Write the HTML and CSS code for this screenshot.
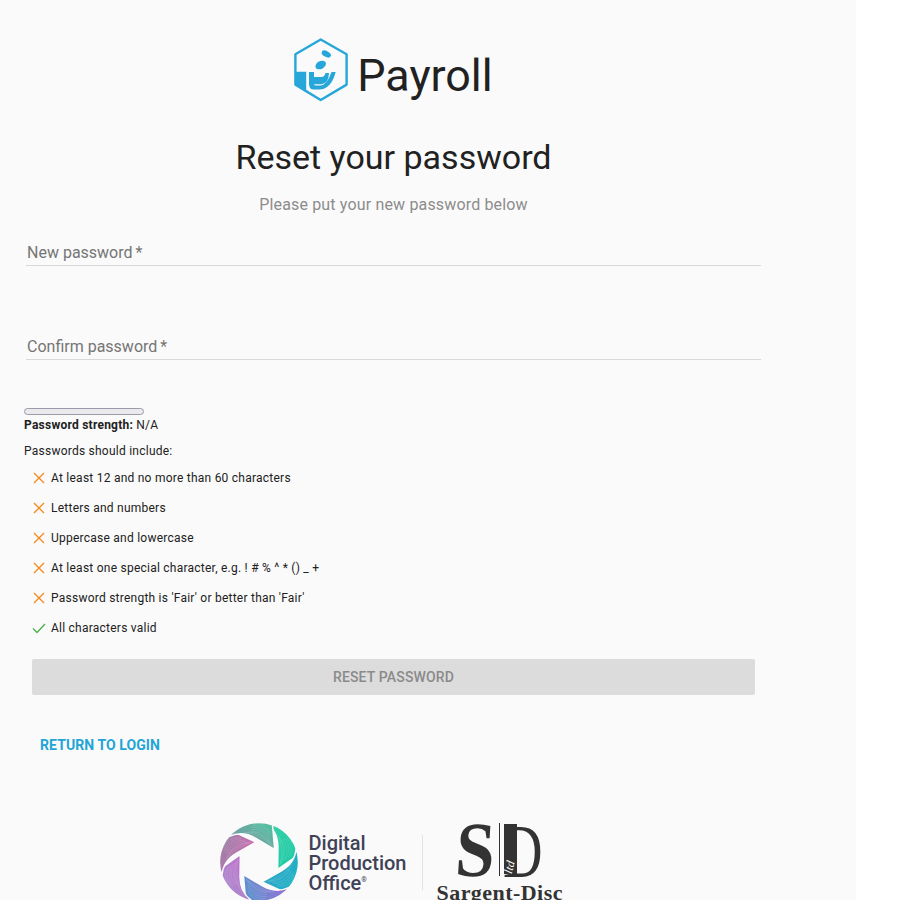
FILE: index.html
```html
<!DOCTYPE html>
<html lang="en">
<head>
<meta charset="utf-8">
<title>Reset your password</title>
<link rel="stylesheet" href="styles.css">
</head>
<body>
<main class="panel">
  <header class="brand">
    <svg class="brand-icon" viewBox="0 0 54 64" width="54" height="64" aria-hidden="true">
      <path class="hex-line" d="M26.7 1.5 52.6 16.3V46.6L26.7 62 1.4 46.6V16.3Z"/>
      <path class="hex-fill" d="M1.4 33.7H12.2V54.6L1.4 46.6Z"/>
      <ellipse class="hex-fill" cx="32.3" cy="16" rx="5" ry="2.9" transform="rotate(28 32.3 16)"/>
      <ellipse class="hex-fill" cx="26.7" cy="27" rx="5.6" ry="3.9" transform="rotate(-28 26.7 27)"/>
      <path class="hex-fill" d="M15 34H20V46Q20 47.5 22 47.5H26Q33 47.5 37.5 34H41.7Q37 51.5 25 51.5H20Q15 51.5 15 46Z"/>
      <path class="hex-fill" d="M20 39H27.5Q30.5 39 31.5 35H35Q34.5 46 27.5 46.3H20Z"/>
    </svg>
    <span class="brand-name">Payroll</span>
  </header>

  <section class="content">
    <h1 class="title">Reset your password</h1>
    <p class="subtitle">Please put your new password below</p>

    <div class="field">New password<span class="req">*</span></div>
    <div class="field field-next">Confirm password<span class="req">*</span></div>

    <div class="meter"></div>
    <p class="strength"><strong>Password strength:</strong> N/A</p>
    <p class="hint">Passwords should include:</p>

    <ul class="rules">
      <li class="rule">
        <svg class="mark mark-no" viewBox="0 0 14 14" aria-hidden="true"><path d="M2 2 12 12M12 2 2 12"/></svg>
        At least 12 and no more than 60 characters
      </li>
      <li class="rule">
        <svg class="mark mark-no" viewBox="0 0 14 14" aria-hidden="true"><path d="M2 2 12 12M12 2 2 12"/></svg>
        Letters and numbers
      </li>
      <li class="rule">
        <svg class="mark mark-no" viewBox="0 0 14 14" aria-hidden="true"><path d="M2 2 12 12M12 2 2 12"/></svg>
        Uppercase and lowercase
      </li>
      <li class="rule">
        <svg class="mark mark-no" viewBox="0 0 14 14" aria-hidden="true"><path d="M2 2 12 12M12 2 2 12"/></svg>
        At least one special character, e.g. ! # % ^ * () _ +
      </li>
      <li class="rule">
        <svg class="mark mark-no" viewBox="0 0 14 14" aria-hidden="true"><path d="M2 2 12 12M12 2 2 12"/></svg>
        Password strength is 'Fair' or better than 'Fair'
      </li>
      <li class="rule">
        <svg class="mark mark-ok" viewBox="0 0 14 14" aria-hidden="true"><path d="M1 7.5 5 11.5 13 3"/></svg>
        All characters valid
      </li>
    </ul>

    <button class="submit" type="button" disabled>RESET PASSWORD</button>
    <a class="back" href="#">RETURN TO LOGIN</a>
  </section>

  <footer class="partners">
    <svg class="dpo-icon" viewBox="-40 -40 80 80" width="80" height="80" aria-hidden="true">
      <defs>
        <linearGradient id="b1" x1="0" y1="0" x2="1" y2="1"><stop offset="0" stop-color="#3fd0a8"/><stop offset="1" stop-color="#14c9a4"/></linearGradient>
        <linearGradient id="b2" x1="1" y1="0" x2="0" y2="1"><stop offset="0" stop-color="#1fb8c4"/><stop offset="1" stop-color="#2e9fc8"/></linearGradient>
        <linearGradient id="b3" x1="1" y1="1" x2="0" y2="0"><stop offset="0" stop-color="#4c9ac8"/><stop offset="1" stop-color="#9a6fd8"/></linearGradient>
        <linearGradient id="b4" x1="0" y1="1" x2="1" y2="0"><stop offset="0" stop-color="#c068c8"/><stop offset="1" stop-color="#a894d0"/></linearGradient>
        <linearGradient id="b5" x1="0" y1="1" x2="1" y2="0"><stop offset="0" stop-color="#d864b8"/><stop offset="1" stop-color="#8a8aa0"/></linearGradient>
        <linearGradient id="b6" x1="0" y1="0" x2="1" y2="0"><stop offset="0" stop-color="#7a9aa4"/><stop offset="1" stop-color="#4fc0a0"/></linearGradient>
        <g id="blade">
          <path class="blade-shape" d="M18.7 7.2 38.9-6.9A39.5 39.5 0 0 0 6.9-38.9C14-34 19-26 19-15Z"/>
          <path class="blade-wave" d="M22-22C27-16 26-8 22 1M24-23C29-16 29-9 24-1M26-24C31-17 31-10 26-2M28-24C33-18 33-11 29-4M30-24C35-18 35-12 31-5M18-28C23-20 23-8 21 3M20-25C25-18 25-8 21.500 2"/>
        </g>
      </defs>
      <use href="#blade" fill="url(#b1)"/>
      <use href="#blade" fill="url(#b2)" transform="rotate(60)"/>
      <use href="#blade" fill="url(#b3)" transform="rotate(120)"/>
      <use href="#blade" fill="url(#b4)" transform="rotate(180)"/>
      <use href="#blade" fill="url(#b5)" transform="rotate(240)"/>
      <use href="#blade" fill="url(#b6)" transform="rotate(300)"/>
    </svg>
    <div class="dpo-name">Digital<br>Production<br>Office<sup class="reg">®</sup></div>
    <div class="divider"></div>
    <div class="sd">
      <div class="sd-mark">
        <span class="sd-s">S</span>
        <span class="sd-bar"></span>
        <span class="sd-d">D</span>
        <span class="sd-stem"></span>
        <span class="sd-ltd">ltd</span>
      </div>
      <div class="sd-name">Sargent-Disc</div>
    </div>
  </footer>
</main>
</body>
</html>
```
FILE: styles.css
```css
* { box-sizing: border-box; }
html, body { margin: 0; height: 900px; overflow: hidden; background: #fff; }
body { font-family: Roboto, sans-serif; color: #212121; }

.panel { width: 856px; height: 900px; background: #fafafa; overflow: hidden; padding-top: 38px; }

.brand { display: flex; align-items: center; justify-content: center; width: 787px; height: 64px; gap: 9px; }
.brand-icon { display: block; flex: none; }
.hex-line { fill: none; stroke: #27a7d9; stroke-width: 2.4; stroke-linejoin: round; }
.hex-fill { fill: #27a7d9; }
.brand-name { margin-top: 12px; font-size: 44.800px; line-height: 64px; color: #212121; }

.content { width: 739px; margin-left: 24px; }
.title { margin: 33px 0 0; height: 44px; font-size: 34px; line-height: 44px; font-weight: 400; text-align: center; color: #212121; }
.subtitle { margin: 14px 0 0; font-size: 16px; line-height: 24px; text-align: center; color: #8c8c8c; letter-spacing: .16px; }

.field { margin: 24px 0 0 2px; width: 735px; height: 25px; padding: 0 0 0 1px; border-bottom: 1px solid #d9d9d9; font-size: 16px; line-height: 24px; color: #757575; }
.field-next { margin-top: 69px; }
.req { margin-left: 3px; }

.meter { margin-top: 48px; width: 120px; height: 7px; background: #e9e9ee; border: 1px solid #9a9aa8; border-radius: 4px; }
.strength { margin: 2px 0 0; font-size: 12px; line-height: 16px; letter-spacing: .24px; color: #212121; }
.strength strong { font-weight: 700; }
.hint { margin: 10px 0 0; font-size: 12px; line-height: 16px; letter-spacing: .24px; color: #212121; }

.rules { list-style: none; margin: 4px 0 0; padding: 0; }
.rule { display: flex; align-items: center; height: 30px; padding-left: 8px; font-size: 12px; letter-spacing: .24px; color: #212121; }
.mark { flex: none; width: 14px; height: 14px; margin-right: 5px; fill: none; stroke-width: 1.4; }
.mark-no { stroke: #f58a1f; }
.mark-ok { stroke: #4caf50; }

.submit { display: block; margin: 16px 0 0 8px; width: 723px; height: 36px; border: 0; border-radius: 2px; background: #dcdcdc; color: #8a8a8a; font: 500 14px/36px Roboto, sans-serif; letter-spacing: .15px; padding: 0; }
.back { display: inline-block; margin: 42px 0 0 16px; font-size: 14px; line-height: 16px; font-weight: 700; letter-spacing: .08px; color: #22a5d6; text-decoration: none; }

.partners { display: flex; align-items: flex-start; margin: 66px 0 0 218.500px; height: 90px; }
.dpo-icon { display: block; flex: none; margin-top: 2px; }
.blade-shape { stroke: #fafafa; stroke-width: 1.4; }
.blade-wave { fill: none; stroke: #fff; stroke-opacity: .22; stroke-width: .5; }
.dpo-name { margin: 13px 0 0 10px; font-size: 20px; line-height: 20px; font-weight: 500; color: #3f4256; }
.reg { font-size: 7px; line-height: 0; vertical-align: 8px; }
.divider { width: 1px; height: 55px; margin: 15px 0 0 15px; background: #e2e2e2; }
.sd { margin: 0 0 0 14px; width: 130px; }
.sd-mark { position: relative; height: 61px; margin-left: 21px; width: 90px; font-family: "Liberation Serif", serif; color: #333; }
.sd-s { position: absolute; left: -2px; top: -12px; font-size: 78px; line-height: 84px; font-weight: 700; transform: scaleX(.9) skewX(-4deg); transform-origin: left center; }
.sd-bar { position: absolute; left: 41px; top: 3px; width: 1.5px; height: 53px; background: #333; }
.sd-d { position: absolute; left: 45px; top: -7px; font-size: 76px; line-height: 76px; font-weight: 400; transform: scaleX(.72); transform-origin: left center; }
.sd-stem { position: absolute; left: 46px; top: 4px; width: 13px; height: 50px; background: #333; }
.sd-ltd { position: absolute; left: 45px; top: 40px; font-size: 12px; line-height: 14px; font-style: italic; color: #fafafa; transform: rotate(-75deg); }
.sd-name { font-family: "Liberation Serif", serif; font-weight: 700; font-size: 22px; line-height: 24px; letter-spacing: .45px; color: #333; white-space: nowrap; }
```
